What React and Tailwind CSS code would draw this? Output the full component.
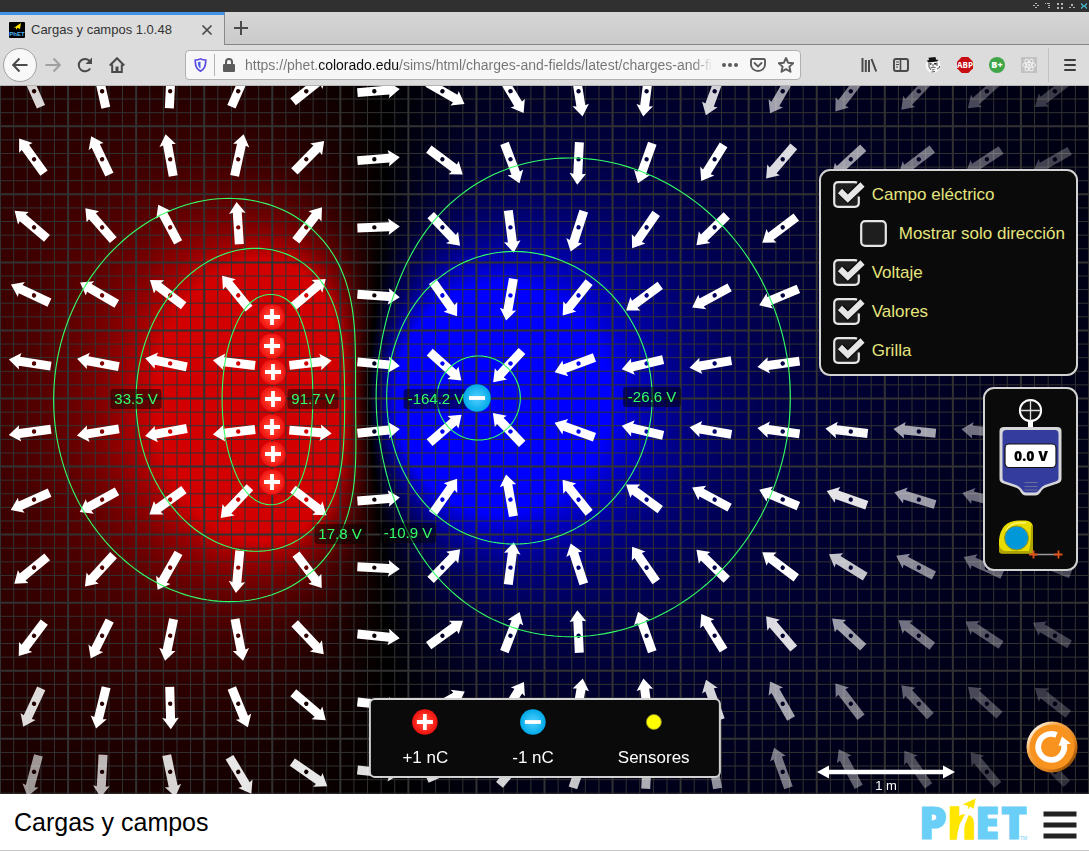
import { useLayoutEffect, useRef } from "react";

const W = 1089;
const H = 708;
const METER = 136.1;
const K = 9;

const plusCharges = [
  [272, 231], [272, 260], [273, 286], [273, 313], [272, 341], [273, 368], [272, 396],
];
const minusCharge = [477, 312];
const charges = [
  ...plusCharges.map(([x, y]) => ({ x, y, q: 1 })),
  { x: minusCharge[0], y: minusCharge[1], q: -7 },
];

function potential(x, y) {
  let v = 0;
  for (const c of charges) v += (K * c.q) / (Math.hypot(x - c.x, y - c.y) / METER || 1e-6);
  return v;
}

function field(x, y) {
  let ex = 0;
  let ey = 0;
  for (const c of charges) {
    const dx = (x - c.x) / METER;
    const dy = (y - c.y) / METER;
    const r3 = Math.pow(dx * dx + dy * dy, 1.5);
    ex += (K * c.q * dx) / r3;
    ey += (K * c.q * dy) / r3;
  }
  return { angle: (Math.atan2(ey, ex) * 180) / Math.PI, size: Math.hypot(ex, ey) };
}

function contour(v, cx, cy) {
  const pts = [];
  for (let i = 0; i < 240; i++) {
    const a = (i / 240) * Math.PI * 2;
    let lo = 1;
    let hi = 500;
    for (let n = 0; n < 24; n++) {
      const m = (lo + hi) / 2;
      const p = potential(cx + m * Math.cos(a), cy + m * Math.sin(a));
      if (v > 0 ? p > v : p < v) lo = m;
      else hi = m;
    }
    pts.push(`${(cx + lo * Math.cos(a)).toFixed(2)},${(cy + lo * Math.sin(a)).toFixed(2)}`);
  }
  return pts.join(" ");
}

const contours = [
  contour(17.8, 272, 313), contour(33.5, 272, 313), contour(91.7, 272, 313),
  contour(-164.2, 477, 312), contour(-26.6, 477, 312), contour(-10.9, 477, 312),
];

const labels = [
  { x: 136, y: 313, w: 51, t: "33.5 V" },
  { x: 313, y: 313, w: 51, t: "91.7 V" },
  { x: 436, y: 313, w: 65, t: "-164.2 V" },
  { x: 652, y: 311, w: 58, t: "-26.6 V" },
  { x: 340, y: 448, w: 51, t: "17.8 V" },
  { x: 408, y: 447, w: 56, t: "-10.9 V" },
];

const STEP = 68.06;
const range = (a, b) => Array.from({ length: b - a + 1 }, (_, i) => a + i);
const arrows = range(-8, 7).flatMap((i) =>
  range(-5, 5).map((j) => {
    const x = 544.5 + (i + 0.5) * STEP;
    const y = 311.5 + (j + 0.5) * STEP;
    return { x, y, ...field(x, y) };
  })
);

function VoltageMap() {
  const ref = useRef(null);
  useLayoutEffect(() => {
    const ctx = ref.current.getContext("2d");
    const img = ctx.createImageData(W, H);
    for (let y = 0; y < H; y++) {
      for (let x = 0; x < W; x++) {
        const s = Math.max(-1, Math.min(1, potential(x, y) / 40));
        const o = (y * W + x) * 4;
        img.data[o] = s > 0 ? 210 * s : 0;
        img.data[o + 2] = s < 0 ? -255 * s : 0;
        img.data[o + 3] = 255;
      }
    }
    ctx.putImageData(img, 0, 0);
  }, []);
  return <canvas ref={ref} width={W} height={H} className="absolute inset-0 size-full object-cover" />;
}

function PlusShape({ x, y }) {
  return (
    <g transform={`translate(${x} ${y})`}>
      <circle r="12.8" fill="url(#plusFill)" />
      <path d="M-8 0H8M0-8V8" stroke="#fff" strokeWidth="3.8" />
    </g>
  );
}

function MinusShape({ x, y, r = 13 }) {
  return (
    <g transform={`translate(${x} ${y})`}>
      <circle r={r} fill="url(#minusFill)" />
      <path d="M-8 0H8" stroke="#fff" strokeWidth="3.8" />
    </g>
  );
}

function FieldView() {
  return (
    <svg viewBox={`0 0 ${W} ${H}`} preserveAspectRatio="xMidYMid slice" className="absolute inset-0 size-full">
      <defs>
        <radialGradient id="plusFill">
          <stop offset="0" stopColor="#ff5a4a" />
          <stop offset="0.6" stopColor="#ff2d20" />
          <stop offset="1" stopColor="#e81010" />
        </radialGradient>
        <radialGradient id="minusFill">
          <stop offset="0" stopColor="#4fcfff" />
          <stop offset="0.5" stopColor="#2cbef5" />
          <stop offset="1" stopColor="#00a9e8" />
        </radialGradient>
      </defs>
      <g stroke="#323232">
        {range(-40, 40).map((i) => (
          <path key={i} d={`M${544.5 + (i * STEP) / 5} 0V${H}`} strokeWidth={i % 5 ? 1 : 2} />
        ))}
        {range(-24, 30).map((i) => (
          <path key={i} d={`M0 ${312.5 + (i * STEP) / 5}H${W}`} strokeWidth={i % 5 ? 1 : 2} />
        ))}
      </g>
      {arrows.map((a, i) => (
        <path
          key={i}
          transform={`translate(${a.x} ${a.y}) rotate(${a.angle})`}
          d="M-17-4.500H14.800L14-8.300L25.500 0L14 8.300L14.800 4.500H-17ZM2.200 0A2.200 2.200 0 1 0-2.200 0A2.200 2.200 0 1 0 2.200 0Z"
          fill="#fff"
          fillRule="evenodd"
          opacity={Math.min(1, a.size / 5)}
        />
      ))}
      <g fill="none" stroke="#33ff66" strokeWidth="1.1">
        {contours.map((c, i) => <polygon key={i} points={c} />)}
      </g>
      {labels.map((l) => (
        <g key={l.t}>
          <rect x={l.x - l.w / 2} y={l.y - 10} width={l.w} height="20" rx="3" fill="#000" fillOpacity="0.5" />
          <text x={l.x} y={l.y + 5} textAnchor="middle" fill="#33ff66" className="font-['Liberation_Sans',sans-serif] text-[15px]">{l.t}</text>
        </g>
      ))}
      {plusCharges.map(([x, y]) => <PlusShape key={y} x={x} y={y} />)}
      <MinusShape x={477} y={312} r={13.8} />
    </svg>
  );
}

function CheckRow({ id, label, checked, indent }) {
  return (
    <div className={indent ? "ml-[27px] flex items-center gap-2" : "flex items-center gap-2"}>
      <span className="relative h-[27px] w-[31px]">
        <input id={id} type="checkbox" defaultChecked={checked} className="peer absolute inset-0 size-full cursor-pointer appearance-none" />
        <svg viewBox="0 0 31 27" className="pointer-events-none block h-[27px] w-[31px] overflow-visible peer-checked:hidden">
          <rect x="1.2" y="1.2" width="24.6" height="24.6" rx="4" fill="#1e1e1e" stroke="#e6e6e6" strokeWidth="2.2" />
        </svg>
        <svg viewBox="0 0 31 27" className="pointer-events-none hidden h-[27px] w-[31px] overflow-visible peer-checked:block">
          <rect x="1.2" y="1.2" width="24.6" height="24.6" rx="4" fill="#1e1e1e" />
          <path d="M24 1.8Q23 1.2 21.8 1.2H5.2Q1.2 1.2 1.2 5.2V21.8Q1.2 25.8 5.2 25.8H21.8Q25.8 25.8 25.8 21.8V15.5" fill="none" stroke="#e6e6e6" strokeWidth="2.2" />
          <path d="M7.500 10L14.800 17.300L29.300 3.500" fill="none" stroke="#0a0a0a" strokeWidth="8.500" />
          <path d="M7 10L14.800 17.600L29.500 3.500" fill="none" stroke="#e6e6e6" strokeWidth="6" strokeLinejoin="miter" />
        </svg>
      </span>
      <label htmlFor={id} className="text-[17px] leading-6 whitespace-nowrap text-[#e5e57e]">{label}</label>
    </div>
  );
}

function Voltmeter() {
  return (
    <svg viewBox="0 0 63 98" className="h-[98px] w-[63px]">
      <circle cx="31.5" cy="12.5" r="10.6" fill="#111" stroke="#fff" strokeWidth="2" />
      <path d="M21 12.5H42M31.5 2V23" stroke="#ddd" strokeWidth="1.3" />
      <rect x="29" y="23" width="5" height="7" fill="#fff" />
      <path d="M5 29H58Q62.500 29 62.500 33V81Q62.500 84 58.500 85.500L48 89Q44.500 90 43 92Q40 97.500 36 97.500H27Q23 97.500 20.500 92Q19 90 15 89L4.500 85.500Q0.500 84 0.500 81V33Q0.500 29 5 29Z" fill="#d6d6d8" />
      <path d="M7 32H56Q59.500 32 59.500 36V80Q59.500 82.500 56.500 83.500L46 87Q42.500 88.500 41 91Q38.500 94.500 36 94.500H27Q24.500 94.500 22.500 91Q20.500 88.500 17 87L6.500 83.500Q3.500 82.500 3.500 80V36Q3.500 32 7 32Z" fill="#343d9e" />
      <rect x="6" y="46" width="51" height="23.500" rx="4" fill="#fff" stroke="#111" strokeWidth="1.200" />
      <text x="32" y="63" textAnchor="middle" fill="#000" className="font-['Open_Sans',sans-serif] text-[14px] font-extrabold">0.0 V</text>
      <path d="M25.500 84.500H38.500M25.500 88.500H38.500M25.500 92H38.500" stroke="#6a6f94" strokeWidth="1.200" />
    </svg>
  );
}

function Tape() {
  return (
    <svg viewBox="0 0 66 40" className="h-[40px] w-[66px]">
      <path d="M4 34.500Q1 34.500 1 31V21Q3 2 20 1.500H28Q35 2 35 9V34.500Z" fill="#e8dc00" />
      <path d="M4 34.500Q1 34.500 1 31V26Q3 33 10 32H31Q33 25 33 7Q35 6 35 9V34.500Z" fill="#b0a400" />
      <path d="M8 12Q12 4.500 21 3.800H28" fill="none" stroke="#fff76a" strokeWidth="1.500" />
      <circle cx="18.500" cy="19" r="12" fill="#0098d8" stroke="#a59a00" strokeWidth="1" />
      <path d="M36 35.500H60" stroke="#9a9a9a" strokeWidth="1.500" />
      <path d="M31 35.500H39.500M35.500 31.500V39.500M56 35.500H64.500M60.500 31.500V39.500" stroke="#e0521c" strokeWidth="1.800" />
    </svg>
  );
}

const iconButton = "grid h-8 w-8 shrink-0 place-items-center";

function BrowserChrome() {
  return (
    <header className="shrink-0 text-[#4a4a4a]">
      <div className="flex h-3 items-center justify-end bg-[#303030] pr-px">
        <svg viewBox="0 0 56 8" className="h-2 w-14 fill-[#b5b5b5]">
          <path d="M3 1h2v1H3zM3 5h2v1H3zM1 3h2v1H1zM5 3h2v1H5zM13 1h1v1h-1zM15 1h3v1h-3zM16 3h2v1h-2zM16 5h2v1h-2zM25 1h2v2h-2zM29 1h2v2h-2zM25 5h2v2h-2zM29 5h2v2h-2zM39 2h2v2h-2zM37 5h2v1h-2zM41 5h2v1h-2z" />
          <path d="M49 1h1v1h1v1h2V2h1V1h1v2h-1v2h1v2h-1V6h-1V5h-2v1h-1v1h-1V5h1V3h-1z" fill="#3fa9b8" />
        </svg>
      </div>
      <div className="flex h-[33px] bg-gradient-to-b from-[#d6d6d6] to-[#cacaca]">
        <div className="flex w-[225px] items-center border-t-[3px] border-r border-t-[#3f93e8] border-r-[#8a8a8a] bg-[#dcdcdc] pl-[9px]">
          <svg viewBox="0 0 16 16" className="h-4 w-4">
            <rect width="16" height="16" rx="1" fill="#000" />
            <path d="M4.500 6L12 1L11 7L8.500 5.800L7 8V5.500Z" fill="#ffe600" />
            <text x="8" y="14" textAnchor="middle" fill="#4db8ff" className="font-['Liberation_Sans',sans-serif] text-[6px] font-bold">PhET</text>
          </svg>
          <span className="ml-[6px] flex-1 text-[13px] whitespace-nowrap text-[#333]">Cargas y campos 1.0.48</span>
          <button aria-label="Cerrar pestaña" className="mr-[9px] grid h-4 w-4 place-items-center">
            <svg viewBox="0 0 12 12" className="h-3 w-3"><path d="M1.500 1.500L10.500 10.500M10.500 1.500L1.500 10.500" stroke="#4a4a4a" strokeWidth="1.700" /></svg>
          </button>
        </div>
        <div className="flex-1 border-b border-[#858585]">
          <button aria-label="Nueva pestaña" className="grid h-8 w-8 place-items-center">
            <svg viewBox="0 0 14 14" className="h-[14px] w-[14px]"><path d="M7 0V14M0 7H14" stroke="#4a4a4a" strokeWidth="2" /></svg>
          </button>
        </div>
      </div>
      <div className="flex h-[41px] items-center border-b border-[#b4b4b4] bg-[#dcdcdc] pr-[3px] pl-[3px]">
        <button aria-label="Atrás" className="grid h-[34px] w-[34px] shrink-0 place-items-center rounded-full border border-[#a0a0a0] bg-[#f8f8f8]">
          <svg viewBox="0 0 16 16" className="h-4 w-4"><path d="M15.500 8H1.500M7.500 1.500L1.200 8L7.500 14.500" fill="none" stroke="#4a4a4a" strokeWidth="2" /></svg>
        </button>
        <button aria-label="Adelante" className={iconButton}>
          <svg viewBox="0 0 16 16" className="h-4 w-4"><path d="M0.500 8H14.500M8.500 1.500L14.800 8L8.500 14.500" fill="none" stroke="#a0a0a0" strokeWidth="2" /></svg>
        </button>
        <button aria-label="Recargar" className={iconButton}>
          <svg viewBox="0 0 16 16" className="h-4 w-4"><path d="M13.200 11.500A6.200 6.200 0 1 1 12.800 4.200" fill="none" stroke="#4a4a4a" strokeWidth="2" /><path d="M15 0.500V7H8.500Z" fill="#4a4a4a" /></svg>
        </button>
        <button aria-label="Inicio" className={iconButton}>
          <svg viewBox="0 0 16 16" className="h-4 w-4"><path d="M0.800 8.500L8 1.200L15.200 8.500M3.200 7.500V14.900H12.800V7.500" fill="none" stroke="#4a4a4a" strokeWidth="2" /><path d="M6.500 15V9.500H9.500V15Z" fill="#4a4a4a" /></svg>
        </button>
        <div className="ml-[52px] flex h-[30px] min-w-0 flex-1 items-center rounded border border-[#b0b0b0] bg-[#f7f7f7] pl-2">
          <svg viewBox="0 0 14 16" className="h-[14px] w-[13px]">
            <path d="M7 1C9 2 11 2.300 13 2.300C13.200 9 11.500 13 7 15C2.500 13 0.800 9 1 2.300C3 2.300 5 2 7 1Z" fill="none" stroke="#5a4be0" strokeWidth="1.900" />
            <path d="M7 4V12C4.800 10.500 4 8 4 4.800Z" fill="#4a5ae8" />
          </svg>
          <span className="ml-[7px] h-[22px] w-px bg-[#b5b5b5]" />
          <svg viewBox="0 0 12 14" className="ml-2 h-[14px] w-3"><path d="M3 7V4A3 3 0 0 1 9 4V7" fill="none" stroke="#5c5c5c" strokeWidth="2" /><rect y="6" width="12" height="8" rx="1" fill="#5c5c5c" /></svg>
          <input
            aria-label="Dirección"
            defaultValue="https://phet.colorado.edu/sims/html/charges-and-fields/latest/charges-and-fields"
            className="ml-[10px] min-w-0 flex-1 bg-[linear-gradient(to_right,#747474_73px,#0c0c0d_73px,#0c0c0d_154px,#747474_154px,#747474_448px,transparent_468px)] bg-clip-text text-[14px] text-transparent outline-none"
          />
          <button aria-label="Acciones de página" className="grid h-7 w-7 place-items-center">
            <svg viewBox="0 0 16 16" className="h-4 w-4 fill-[#5c5c5c]"><circle cx="2" cy="8" r="2" /><circle cx="8" cy="8" r="2" /><circle cx="14" cy="8" r="2" /></svg>
          </button>
          <button aria-label="Guardar en Pocket" className="grid h-7 w-7 place-items-center">
            <svg viewBox="0 0 16 16" className="h-4 w-4" fill="none" stroke="#5c5c5c" strokeWidth="1.900"><path d="M2.200 2H13.800Q15 2 15 3.200V7.500A7 6.500 0 0 1 1 7.500V3.200Q1 2 2.200 2Z" /><path d="M4.500 6L8 9.500L11.500 6" strokeLinecap="round" /></svg>
          </button>
          <button aria-label="Añadir a marcadores" className="grid h-7 w-7 place-items-center">
            <svg viewBox="0 0 16 16" className="h-4 w-4" fill="none" stroke="#5c5c5c" strokeWidth="1.900" strokeLinejoin="round"><path d="M8 1L10.100 5.700L15.200 6.200L11.400 9.600L12.500 14.800L8 12.100L3.500 14.800L4.600 9.600L0.800 6.200L5.900 5.700Z" /></svg>
          </button>
        </div>
        <div className="ml-[52px] flex items-center">
          <button aria-label="Catálogo" className={iconButton}>
            <svg viewBox="0 0 16 16" className="h-4 w-4" stroke="#4a4a4a" strokeWidth="2"><path d="M1.500 1V15M4.800 3V15M8 3V15M10.500 2L15.200 14.500" /></svg>
          </button>
          <button aria-label="Barra lateral" className={iconButton}>
            <svg viewBox="0 0 16 16" className="h-4 w-4" fill="none" stroke="#4a4a4a"><rect x="1" y="2" width="14" height="12" rx="2" strokeWidth="2" /><path d="M7.500 2V14" strokeWidth="1.600" /><path d="M3 5H6M3 7.500H6M3 10H5" strokeWidth="1" /></svg>
          </button>
          <button aria-label="Extensión" className={iconButton}>
            <svg viewBox="0 0 16 16" className="h-4 w-4">
              <circle cx="8" cy="8.500" r="7.500" fill="#f6f6f6" />
              <path d="M2 3.500L4 3L3.500 0.800L10.500 0L11 2.500L13.500 3L12 4.500L3 5.500Z" fill="#111" />
              <path d="M4.500 6.500L6.500 6L6.500 7.500L5 7.800ZM9 6H11.500V7.500L9.500 7.800Z" fill="#222" />
              <path d="M4 6V10L6 13M12 5.500V9M8 7V9.500M5.500 11Q8 9.500 10.500 10.500M7 13L9.500 12.500M6.500 15L10 14.500M12 12L14.500 10.500V9" stroke="#444" strokeWidth="0.900" fill="none" />
            </svg>
          </button>
          <button aria-label="Adblock Plus" className={iconButton}>
            <svg viewBox="0 0 16 16" className="h-4 w-4"><path d="M4.700 0H11.300L16 4.700V11.300L11.300 16H4.700L0 11.300V4.700Z" fill="#c70d12" /><text x="8" y="10.800" textAnchor="middle" fill="#fff" className="font-['Open_Sans',sans-serif] text-[8px] font-bold">ABP</text></svg>
          </button>
          <button aria-label="Extensión B+" className={iconButton}>
            <svg viewBox="0 0 16 16" className="h-4 w-4"><circle cx="8" cy="8" r="8" fill="#3fa648" /><text x="8" y="11.300" textAnchor="middle" fill="#fff" className="font-['Open_Sans',sans-serif] text-[9px] font-extrabold">B+</text></svg>
          </button>
          <button aria-label="React" className={iconButton}>
            <svg viewBox="0 0 16 16" className="h-4 w-4" fill="none" stroke="#f2f2f2" strokeWidth="1"><rect width="16" height="16" fill="#c2c2c2" stroke="none" /><ellipse cx="8" cy="8" rx="6.500" ry="2.500" /><ellipse cx="8" cy="8" rx="6.500" ry="2.500" transform="rotate(60 8 8)" /><ellipse cx="8" cy="8" rx="6.500" ry="2.500" transform="rotate(120 8 8)" /><circle cx="8" cy="8" r="1" fill="#f2f2f2" /></svg>
          </button>
          <span className="ml-[3px] h-[34px] w-px bg-[#c2c2c2]" />
          <button aria-label="Menú" className="ml-[5px] grid h-8 w-8 place-items-center">
            <svg viewBox="0 0 12 12" className="h-3 w-3" stroke="#3c3c3c" strokeWidth="2" strokeLinecap="round"><path d="M1 1H11M1 6H11M1 11H11" /></svg>
          </button>
        </div>
      </div>
    </header>
  );
}

function PhetLogo() {
  return (
    <svg viewBox="0 0 108 44" className="h-11 w-[108px] overflow-visible" role="img" aria-label="PhET">
      <g className="font-['Open_Sans',sans-serif] text-[44px] font-extrabold" fill="#6acff6" stroke="#6acff6" strokeWidth="1.200">
        <text x="-2" y="41">P</text>
        <text x="54" y="41">E</text>
        <text x="80" y="41">T</text>
      </g>
      <text x="27" y="41" fill="#ffe600" stroke="#ffe600" strokeWidth="1.500" className="font-['Open_Sans',sans-serif] text-[42px] font-extrabold">h</text>
      <path d="M35.500 43Q36.500 25 48 11L50.500 8L50.500 12Q42 26 41 43Z" fill="#fff" />
      <path d="M41 6.500L55 0L53 11L49 9L47 12L46.500 8Z" fill="#ffe600" stroke="#fff" strokeWidth="0.600" />
      <text x="99" y="42" fill="#6acff6" className="font-['Liberation_Sans',sans-serif] text-[5px]">TM</text>
    </svg>
  );
}

function ToolButton({ label, children }) {
  return (
    <button className="flex flex-col items-center gap-[10px] text-[17px] leading-6 whitespace-nowrap text-white">
      <svg viewBox="-14 -14 28 28" className="h-7 w-7">{children}</svg>
      {label}
    </button>
  );
}

export default function App() {
  return (
    <div className="flex h-screen min-h-[640px] flex-col overflow-hidden font-['Liberation_Sans',Arial,sans-serif]">
      <BrowserChrome />
      <main className="relative min-h-0 flex-1 overflow-hidden bg-black">
        <VoltageMap />
        <FieldView />
        <div className="absolute top-[83px] right-[11px] flex flex-col items-end gap-[11px]">
          <fieldset className="flex flex-col gap-3 rounded-[11px] border-2 border-[#d2d2d2] bg-[#0a0a0a] py-[10px] pr-[11px] pl-3">
            <CheckRow id="campo" label="Campo eléctrico" checked />
            <CheckRow id="direccion" label="Mostrar solo dirección" indent />
            <CheckRow id="voltaje" label="Voltaje" checked />
            <CheckRow id="valores" label="Valores" checked />
            <CheckRow id="grilla" label="Grilla" checked />
          </fieldset>
          <div className="flex w-[95px] flex-col items-center gap-[23px] rounded-[11px] border-2 border-[#d2d2d2] bg-[#0a0a0a] pt-[9px] pb-[10px]">
            <button aria-label="Voltímetro"><Voltmeter /></button>
            <button aria-label="Cinta métrica"><Tape /></button>
          </div>
        </div>
        <div className="absolute bottom-[16px] left-1/2 flex -translate-x-1/2 gap-16 rounded-md border-2 border-[#d2d2d2] bg-[#0a0a0a] pt-2 pr-[29px] pb-[6px] pl-8">
          <ToolButton label="+1 nC"><PlusShape x={0} y={0} /></ToolButton>
          <ToolButton label="-1 nC"><MinusShape x={0} y={0} r={12.8} /></ToolButton>
          <ToolButton label="Sensores"><circle r="7.500" fill="#ff0" stroke="#8a8a30" strokeWidth="0.800" /></ToolButton>
        </div>
        <div className="absolute right-[134px] bottom-px flex flex-col items-center text-[13px] leading-[14px] text-white">
          <svg viewBox="0 0 138 14" className="h-[14px] w-[138px]"><path d="M0 7L12 0.500V4.800H126V0.500L138 7L126 13.500V9.200H12V13.500Z" fill="#fff" /></svg>
          1 m
        </div>
        <button aria-label="Reiniciar todo" className="absolute right-[11px] bottom-[21px]">
          <svg viewBox="0 0 52 52" className="h-[52px] w-[52px]">
            <defs>
              <linearGradient id="resetRim" x1="0.150" y1="0.150" x2="0.850" y2="0.850">
                <stop offset="0" stopColor="#fff0dc" />
                <stop offset="0.250" stopColor="#f9a94e" />
                <stop offset="0.750" stopColor="#e0811a" />
                <stop offset="1" stopColor="#9a5208" />
              </linearGradient>
            </defs>
            <circle cx="26" cy="26" r="25.500" fill="url(#resetRim)" />
            <circle cx="26" cy="26" r="22.500" fill="#f7931e" />
            <path d="M30.500 14A13 13 0 1 0 38 23.500" fill="none" stroke="#fff" strokeWidth="5.800" />
            <path d="M36 15.500L44.800 22.500L32.500 25Z" fill="#fff" />
          </svg>
        </button>
      </main>
      <footer className="flex h-[57px] shrink-0 items-center justify-between border-b border-[#c8c8c8] bg-white pr-3 pl-[14px]">
        <h1 className="text-[25px] leading-8 text-black">Cargas y campos</h1>
        <div className="flex items-center gap-[14px]">
          <a href="https://phet.colorado.edu" className="-mt-1"><PhetLogo /></a>
          <button aria-label="Menú de PhET">
            <svg viewBox="0 0 34 28" className="mt-[6px] h-7 w-[34px]" stroke="#222" strokeWidth="5" strokeLinecap="butt"><path d="M0.500 3H33.500M0.500 14H33.500M0.500 25H33.500" /></svg>
          </button>
        </div>
      </footer>
    </div>
  );
}
